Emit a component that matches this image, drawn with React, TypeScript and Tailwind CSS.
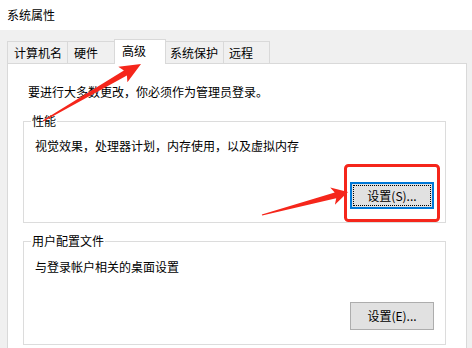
import React from "react";

type Pt = [number, number];

function arrowPoints(tail: Pt, tip: Pt, headLen: number, headW: number, neckW: number, tailW: number): string {
  const dx = tip[0] - tail[0];
  const dy = tip[1] - tail[1];
  const len = Math.hypot(dx, dy);
  const d: Pt = [dx / len, dy / len];
  const n: Pt = [-d[1], d[0]];
  const neck: Pt = [tip[0] - d[0] * headLen, tip[1] - d[1] * headLen];
  const back: Pt = [neck[0] - d[0] * 3, neck[1] - d[1] * 3];
  const p = (b: Pt, s: number): string => `${(b[0] + n[0] * s).toFixed(1)},${(b[1] + n[1] * s).toFixed(1)}`;
  return [
    p(tail, tailW),
    p(neck, neckW),
    p(back, headW),
    `${tip[0]},${tip[1]}`,
    p(back, -headW),
    p(neck, -neckW),
    p(tail, -tailW),
  ].join(" ");
}

function Tab({ label, className }: { label: string; className: string }) {
  return (
    <div className={`flex items-center border-[#d9d9d9] ${className}`}>
      <span>{label}</span>
    </div>
  );
}

function Button({ label, focused }: { label: string; focused?: boolean }) {
  if (focused) {
    return (
      <div className="w-[84px] h-[27px] border-2 border-[#0078d7] bg-[#e1e1e1] p-px">
        <div className="w-full h-full border border-dotted border-black flex items-center justify-center">
          <span>{label}</span>
        </div>
      </div>
    );
  }
  return (
    <div className="w-[84px] h-[28px] border border-[#adadad] bg-[#e1e1e1] flex items-center justify-center">
      <span>{label}</span>
    </div>
  );
}

export default function App() {
  return (
    <div
      className="relative w-[472px] h-[348px] overflow-hidden bg-[#f0f0f0] text-[12px] leading-[16px] text-black"
      style={{ fontFamily: '"Noto Sans CJK SC", "Noto Sans", sans-serif' }}
    >
      <div className="h-[30px] bg-white flex items-center pl-[7px]">
        <span>系统属性</span>
      </div>

      <div className="mt-[9px] h-[24px] pl-[7px] flex items-end">
        <Tab label="计算机名" className="w-[60px] h-[22px] border-l border-t pl-[6px]" />
        <Tab label="硬件" className="w-[47px] h-[22px] border-l border-t pl-[6px]" />
        <Tab
          label="高级"
          className="relative z-10 w-[52px] h-[25px] mb-[-1px] border-l border-r border-t bg-white pl-[7px] pb-[2px]"
        />
        <Tab label="系统保护" className="w-[58px] h-[22px] border-t border-r pl-[4px]" />
        <Tab label="远程" className="w-[46px] h-[22px] border-t border-r pl-[5px]" />
      </div>

      <div className="ml-[7px] w-[460px] h-[300px] border border-[#d9d9d9] bg-white">
        <div className="pt-[20px] pl-[20px]">要进行大多数更改，你必须作为管理员登录。</div>

        <div className="relative mt-[21px] ml-[15px] w-[423px] h-[102px] border border-[#dcdcdc]">
          <div className="absolute left-[7px] top-[-9px] px-px bg-white">性能</div>
          <div className="pt-[16px] pl-[11px]">视觉效果，处理器计划，内存使用，以及虚拟内存</div>
          <div className="flex justify-end pr-[11px] mt-[28px]">
            <Button label="设置(S)..." focused />
          </div>
        </div>

        <div className="relative mt-[18px] ml-[15px] w-[423px] h-[104px] border border-[#dcdcdc]">
          <div className="absolute left-[7px] top-[-9px] px-px bg-white">用户配置文件</div>
          <div className="pt-[17px] pl-[11px]">与登录帐户相关的桌面设置</div>
          <div className="flex justify-end pr-[11px] mt-[27px]">
            <Button label="设置(E)..." />
          </div>
        </div>
      </div>

      <svg className="absolute inset-0 pointer-events-none" width="472" height="348" viewBox="0 0 472 348">
        <polygon fill="#f5261b" points={arrowPoints([43, 121], [141, 64], 18, 9, 3, 0.6)} />
        <polygon fill="#f5261b" points={arrowPoints([262, 215], [348, 192], 13, 9, 3, 0.6)} />
        <rect x="345.5" y="165.5" width="93" height="55" rx="3" fill="none" stroke="#f5261b" strokeWidth="3" />
      </svg>
    </div>
  );
}
